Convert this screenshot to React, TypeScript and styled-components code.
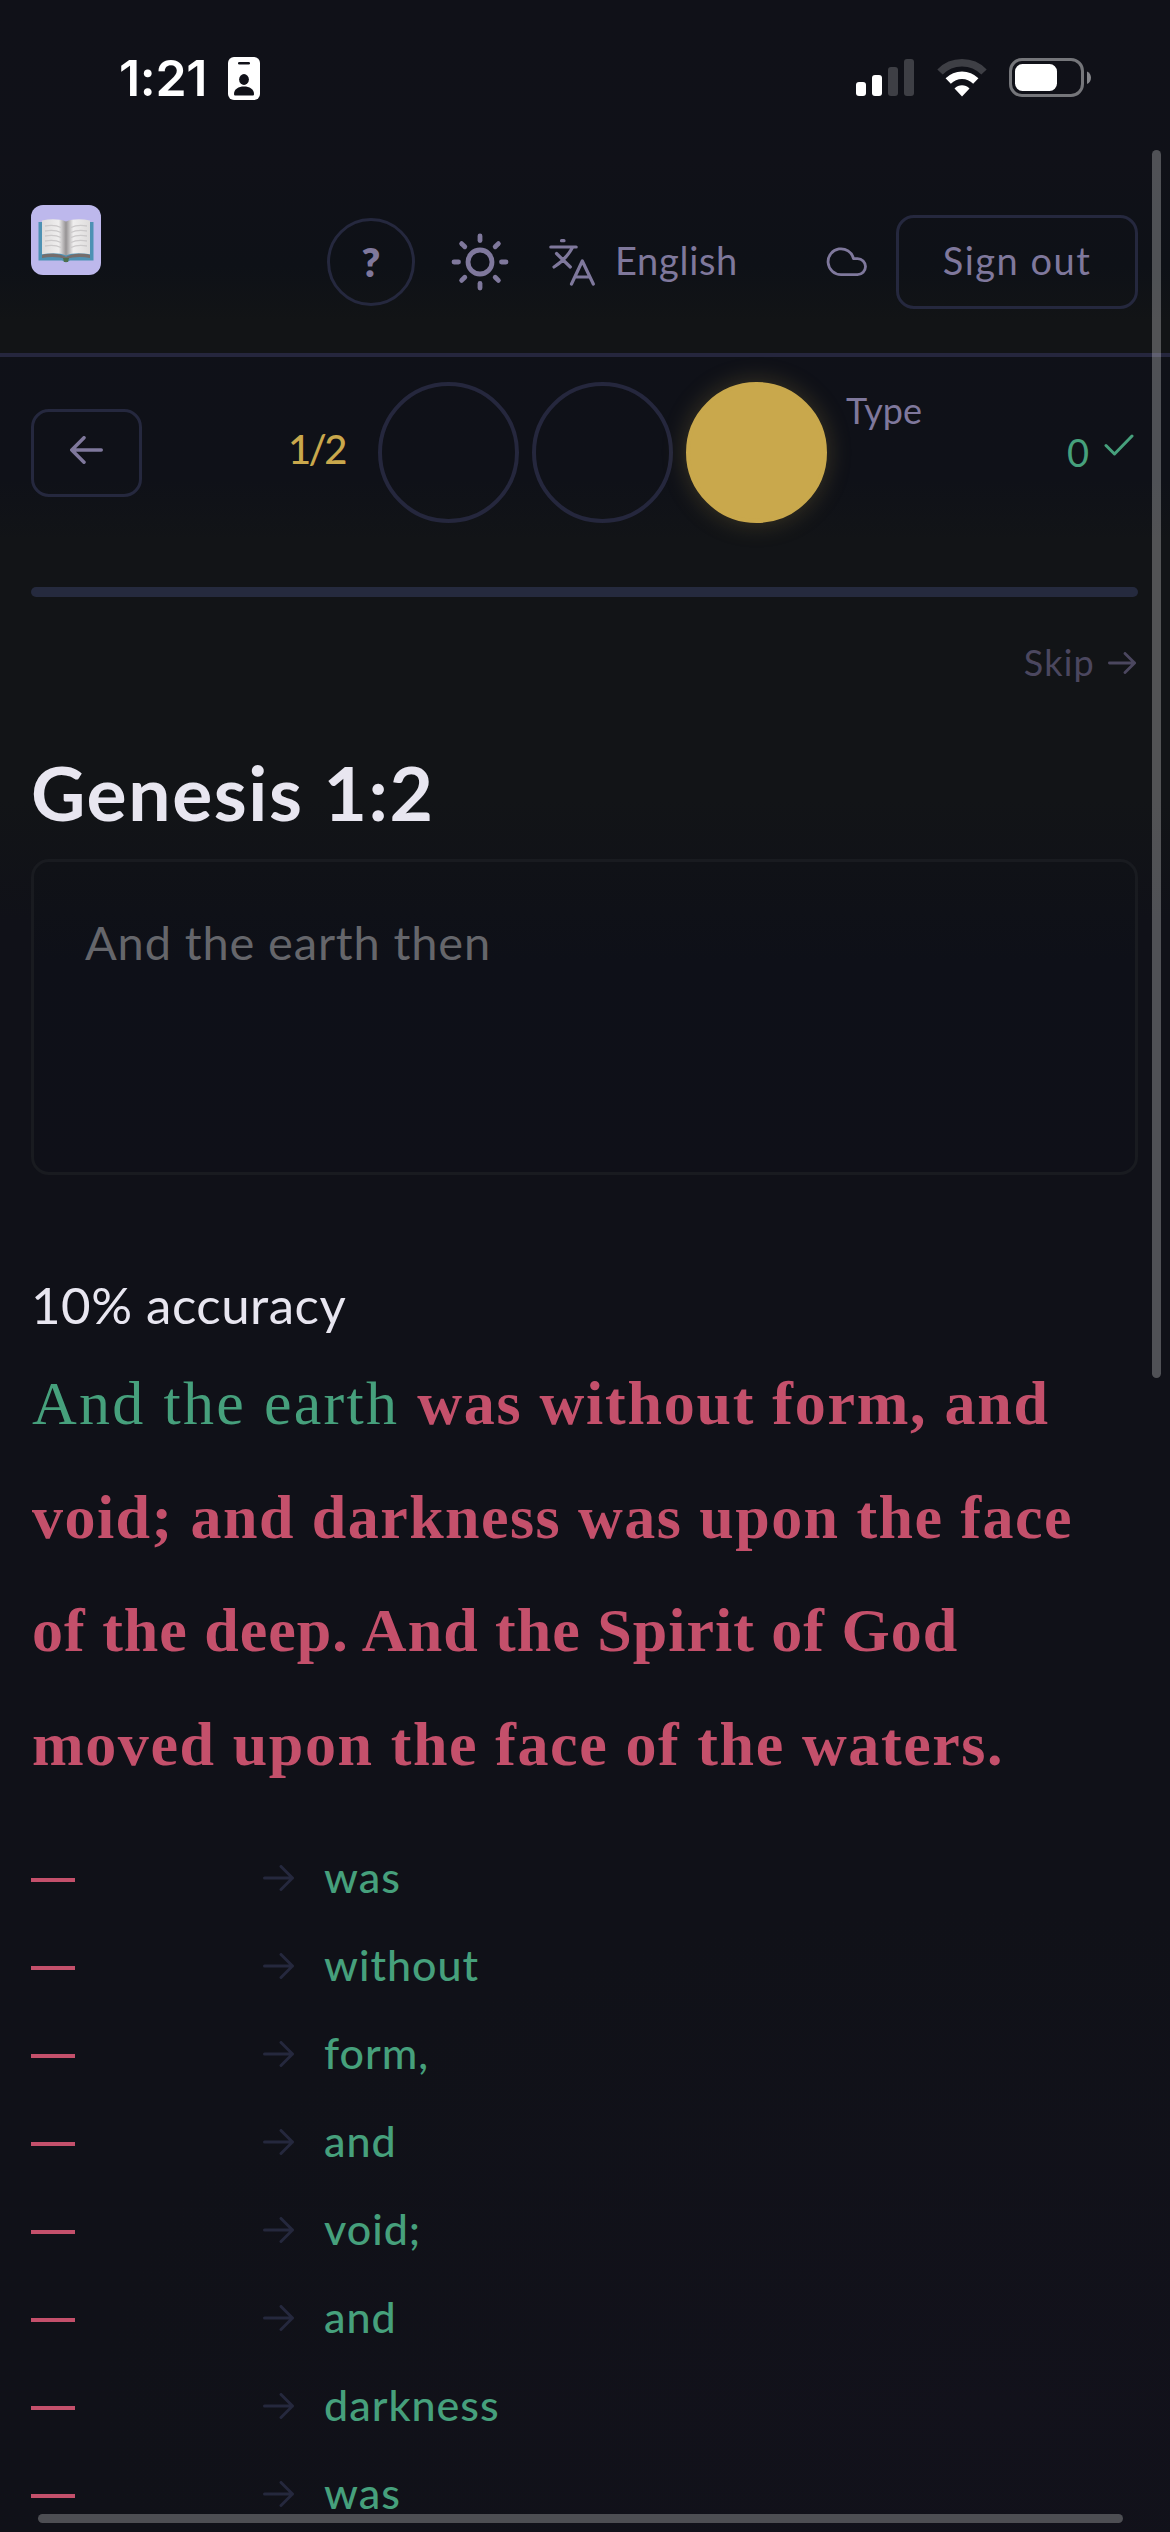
import React from 'react';
import styled, { createGlobalStyle } from 'styled-components';

const sans = '"Lato", "Noto Sans", sans-serif';
const serif = '"Liberation Serif", serif';

const GlobalStyle = createGlobalStyle`
  * { box-sizing: border-box; }
  html, body { margin: 0; padding: 0; background: #101118; }
`;

const Page = styled.div`
  position: relative;
  width: 1170px;
  height: 2532px;
  overflow: hidden;
  color: #e8e6f0;
  font-family: ${sans};
  background:
    radial-gradient(ellipse 900px 500px at 85% 95%, rgba(20, 18, 30, 0.5), transparent),
    linear-gradient(#101118 0, #0f1118 480px, #121417 540px, #121417 800px, #101118 920px, #101118 100%);
`;

const Label = styled.span<{ $size: number; $color: string; $spacing?: number; $weight?: number; $width?: number }>`
  display: block;
  flex: none;
  width: ${(p) => (p.$width ? `${p.$width}px` : 'auto')};
  font-size: ${(p) => p.$size}px;
  line-height: 1.2;
  font-weight: ${(p) => p.$weight ?? 400};
  letter-spacing: ${(p) => p.$spacing ?? 0}px;
  color: ${(p) => p.$color};
  white-space: nowrap;
`;

const StatusBar = styled.div`
  display: flex;
  align-items: center;
  justify-content: space-between;
  height: 156px;
  padding: 0 79px 0 119px;
`;

const StatusGroup = styled.div<{ $gap: number }>`
  display: flex;
  align-items: center;
  gap: ${(p) => p.$gap}px;
`;

const Clock = styled.span`
  width: 90px;
  font: 600 50px/60px Inter, sans-serif;
  letter-spacing: -0.3px;
  color: #fff;
  white-space: nowrap;
`;

const Header = styled.header`
  display: flex;
  align-items: flex-start;
  justify-content: space-between;
  height: 201px;
  padding: 49px 32px 0 31px;
  border-bottom: 4px solid #25263d;
  background: linear-gradient(#101118 0, #0e1117 110px, #121416 165px);
`;

const Actions = styled.nav`
  display: flex;
  align-items: center;
  height: 94px;
  margin-top: 10px;
`;

const HelpButton = styled.button`
  display: flex;
  align-items: center;
  justify-content: center;
  width: 88px;
  height: 88px;
  padding: 0;
  border: 3px solid #25283e;
  border-radius: 50%;
  background: transparent;
  font-family: ${sans};
`;

const Spacer = styled.span<{ $w: number }>`
  flex: none;
  width: ${(p) => p.$w}px;
`;

const OutlineButton = styled.button<{ $w: number; $h: number }>`
  display: flex;
  align-items: center;
  justify-content: center;
  width: ${(p) => p.$w}px;
  height: ${(p) => p.$h}px;
  padding: 0;
  border: 3px solid #25283e;
  border-radius: 18px;
  background: transparent;
  font-family: ${sans};
`;

const Toolbar = styled.div`
  display: flex;
  align-items: center;
  height: 141px;
  margin: 25px 32px 0 31px;
`;

const Steps = styled.div`
  display: flex;
  gap: 13px;
`;

const Step = styled.span<{ $active?: boolean }>`
  width: 141px;
  height: 141px;
  border-radius: 50%;
  border: 4px solid ${(p) => (p.$active ? '#c9a84c' : '#25273d')};
  background: ${(p) => (p.$active ? '#c9a84c' : 'transparent')};
  box-shadow: ${(p) => (p.$active ? '0 0 24px rgba(201, 168, 76, 0.25)' : 'none')};
`;

const StepName = styled.div`
  align-self: flex-start;
  margin: 7px 0 0 19px;
`;

const Score = styled.div`
  display: flex;
  align-items: center;
  margin-left: auto;
  gap: 15px;
  padding-right: 4px;
`;

const Raised = styled.span<{ $by: number }>`
  display: flex;
  padding-bottom: ${(p) => p.$by}px;
`;

const Track = styled.div`
  height: 10px;
  margin: 64px 32px 0 31px;
  border-radius: 5px;
  background: #252a3e;
`;

const SkipRow = styled.div`
  display: flex;
  align-items: center;
  justify-content: flex-end;
  gap: 13px;
  height: 44px;
  margin-top: 44px;
  padding-right: 34px;
`;

const Title = styled.h1`
  margin: 57px 0 0 31px;
  font-size: 75px;
  line-height: 100px;
  font-weight: 700;
  letter-spacing: 1.6px;
`;

const Answer = styled.div`
  height: 316px;
  margin: 17px 32px 0 31px;
  padding: 52px 51px;
  border: 3px solid #191b20;
  border-radius: 18px;
  background: linear-gradient(#101217 0, #0e1018 100px, #0f1018 100%);
`;

const Accuracy = styled.div`
  height: 60px;
  margin: 99px 0 0 31px;
`;

const Verse = styled.div`
  margin: 13px 0 0 32px;
`;

const VerseLine = styled.div<{ $spacing: number }>`
  height: 113.7px;
  font-family: ${serif};
  font-size: 62px;
  line-height: 113.7px;
  font-weight: 700;
  letter-spacing: ${(p) => p.$spacing}px;
  color: #c4506b;
  white-space: pre;
`;

const Correct = styled.span<{ $spacing: number }>`
  font-weight: 400;
  letter-spacing: ${(p) => p.$spacing}px;
  color: #46a07c;
`;

const Fixes = styled.div`
  margin: 32px 0 0 31px;
`;

const FixRow = styled.div`
  display: grid;
  grid-template-columns: 232px 61px auto;
  align-items: center;
  height: 88px;
`;

const Missing = styled.span`
  width: 44px;
  height: 4px;
  margin-top: 4px;
  background: #c4506b;
`;

const VerticalThumb = styled.div`
  position: absolute;
  left: 1152px;
  top: 150px;
  width: 9px;
  height: 1228px;
  border-radius: 5px;
  background: rgba(255, 255, 255, 0.27);
`;

const HorizontalThumb = styled.div`
  position: absolute;
  left: 38px;
  top: 2514px;
  width: 1085px;
  height: 9px;
  border-radius: 5px;
  background: #4d4e53;
`;

const muted = '#7f789c';

const BadgeIcon = () => (
  <svg width="32" height="43" viewBox="0 0 32 43">
    <rect width="32" height="43" rx="6" fill="#fff" />
    <rect x="10" y="5" width="12" height="2.6" rx="1.3" fill="#101118" />
    <ellipse cx="16" cy="22.5" rx="4.9" ry="5.4" fill="#101118" />
    <path d="M6 37c0-5 4.500-7.500 10-7.500s10 2.500 10 7.500c0 1-.5 1.600-1.500 1.600h-17C6.500 38.600 6 38 6 37z" fill="#101118" />
  </svg>
);

const SignalIcon = () => (
  <svg width="58" height="38" viewBox="0 0 58 38">
    <rect x="0" y="23" width="10" height="14" rx="3" fill="#fff" />
    <rect x="16" y="16" width="10" height="21" rx="3" fill="#fff" />
    <rect x="32" y="8" width="10" height="29" rx="3" fill="#3e3f45" />
    <rect x="48" y="0" width="10" height="37" rx="3" fill="#3e3f45" />
  </svg>
);

const WifiIcon = () => (
  <svg width="50" height="38" viewBox="0 0 50 38">
    <path d="M3 13C15 0.700 35 0.700 47 13" fill="none" stroke="#3e3f45" strokeWidth="7.500" />
    <path d="M11.200 22c7.800-7.700 19.800-7.700 27.600 0" fill="none" stroke="#fff" strokeWidth="7.500" />
    <path d="M25 37.500l-7.500-8c4.300-4.300 10.700-4.300 15 0z" fill="#fff" />
  </svg>
);

const BatteryIcon = () => (
  <svg width="82" height="40" viewBox="0 0 82 40">
    <rect x="1.500" y="1.500" width="72" height="36" rx="11.500" fill="none" stroke="#75767a" strokeWidth="3" />
    <rect x="6" y="6" width="42" height="27" rx="7.500" fill="#fff" />
    <path d="M78 13.500c5.300 2 5.300 10.500 0 12.500z" fill="#85868a" />
  </svg>
);

const BookIcon = () => (
  <svg width="70" height="70" viewBox="0 0 70 70">
    <defs>
      <linearGradient id="left-page" x1="0" x2="1">
        <stop offset="0" stopColor="#dedcdc" />
        <stop offset="0.7" stopColor="#efeeee" />
        <stop offset="1" stopColor="#969394" />
      </linearGradient>
      <linearGradient id="right-page" x1="1" x2="0">
        <stop offset="0" stopColor="#dedcdc" />
        <stop offset="0.7" stopColor="#efeeee" />
        <stop offset="1" stopColor="#969394" />
      </linearGradient>
    </defs>
    <rect width="70" height="70" rx="12" fill="#bdb8ec" />
    <path d="M7.500 17h55v38.500H39l-4 2-4-2H7.500z" fill="#4d91b3" />
    <path d="M11 50c8-2.500 17-2 24 2 7-4 16-4.500 24-2v3c-8-1.500-17-1.500-24 1.500-7-3-16-3-24-1.500z" fill="#756d6c" />
    <path d="M11 15.500c9-2 18-1.500 24 1v34c-6-2.800-15-3-24-1.200z" fill="url(#left-page)" />
    <path d="M59 15.500c-9-2-18-1.500-24 1v34c6-2.800 15-3 24-1.200z" fill="url(#right-page)" />
    <path
      d="M14 21c6-1 12-.5 16 1.500M14 26c6-1 12-.5 16 1.500M14 31c6-1 12-.5 16 1.500M14 36c6-1 12-.5 16 1.500M14 41c6-1 12-.5 16 1.500M56 21c-6-1-12-.5-16 1.500M56 26c-6-1-12-.5-16 1.500M56 31c-6-1-12-.5-16 1.500M56 36c-6-1-12-.5-16 1.500M56 41c-6-1-12-.5-16 1.500"
      fill="none" stroke="#cbc9ca" strokeWidth="1.300"
    />
    <path d="M32 53h6l-1 4h-4z" fill="#4f6f4e" />
  </svg>
);

const SunIcon = () => (
  <svg width="58" height="58" viewBox="-29 -29 58 58" fill="none" stroke={muted} strokeWidth="4.800" strokeLinecap="round">
    <circle r="12" />
    {[0, 45, 90, 135, 180, 225, 270, 315].map((a) => (
      <path key={a} d="M0-21.500V-26" transform={`rotate(${a})`} />
    ))}
  </svg>
);

const TranslateIcon = () => (
  <svg width="48" height="48" viewBox="0 0 48 48" fill="none" stroke={muted} strokeWidth="3.200" strokeLinecap="round" strokeLinejoin="round">
    <path d="M13.500 2.700h2.500M2.800 9H28.200M24.500 9.500Q17.500 22 6 29M8.500 15.500L22.300 29M23.500 46L34.300 23L45.300 46M27 39H42" />
  </svg>
);

const CloudIcon = () => (
  <svg width="42" height="32" viewBox="0 0 42 32" fill="none" stroke={muted} strokeWidth="2.800" strokeLinecap="round" strokeLinejoin="round">
    <path d="M31.500 28.600H15A12.900 12.900 0 1 1 27.500 12.600H31.500a8 8 0 1 1 0 16z" />
  </svg>
);

const ArrowIcon = ({ w, h, color, stroke, left }: { w: number; h: number; color: string; stroke: number; left?: boolean }) => {
  const m = stroke / 2;
  const d = left
    ? `M${w - m} ${h / 2}H${m}M${h / 2} ${m}L${m} ${h / 2}L${h / 2} ${h - m}`
    : `M${m} ${h / 2}H${w - m}M${w - h / 2} ${m}L${w - m} ${h / 2}L${w - h / 2} ${h - m}`;
  return (
    <svg width={w} height={h} viewBox={`0 0 ${w} ${h}`} fill="none" stroke={color} strokeWidth={stroke} strokeLinecap="round" strokeLinejoin="round">
      <path d={d} />
    </svg>
  );
};

const CheckIcon = () => (
  <svg width="30" height="22" viewBox="0 0 30 22" fill="none" stroke="#46a07c" strokeWidth="3" strokeLinecap="round" strokeLinejoin="round">
    <path d="M2 11.500l8.500 8.500L28 2" />
  </svg>
);

const corrections = ['was', 'without', 'form,', 'and', 'void;', 'and', 'darkness', 'was'];

export default function App() {
  return (
    <Page>
      <GlobalStyle />
      <StatusBar>
        <StatusGroup $gap={19}>
          <Clock>1:21</Clock>
          <BadgeIcon />
        </StatusGroup>
        <StatusGroup $gap={22.5}>
          <SignalIcon />
          <WifiIcon />
          <BatteryIcon />
        </StatusGroup>
      </StatusBar>

      <Header>
        <BookIcon />
        <Actions>
          <HelpButton>
            <Label $size={40} $weight={800} $color={muted}>?</Label>
          </HelpButton>
          <Spacer $w={36} />
          <SunIcon />
          <Spacer $w={39} />
          <TranslateIcon />
          <Spacer $w={19} />
          <Raised $by={2}>
            <Label $size={38} $color={muted} $spacing={0.7} $width={125}>English</Label>
          </Raised>
          <Spacer $w={86} />
          <CloudIcon />
          <Spacer $w={28} />
          <OutlineButton $w={242} $h={94}>
            <Raised $by={2}>
              <Label $size={38} $color={muted} $spacing={1.5}>Sign out</Label>
            </Raised>
          </OutlineButton>
        </Actions>
      </Header>

      <Toolbar>
        <OutlineButton $w={111} $h={88}>
          <Raised $by={6}>
            <ArrowIcon w={33} h={28} color={muted} stroke={3.5} left />
          </Raised>
        </OutlineButton>
        <Spacer $w={146} />
        <Raised $by={8}>
          <Label $size={40} $color="#c9a84c" $weight={500} $spacing={-2.6} $width={90}>1/2</Label>
        </Raised>
        <Steps>
          <Step />
          <Step />
          <Step $active />
        </Steps>
        <StepName>
          <Label $size={36} $color={muted}>Type</Label>
        </StepName>
        <Score>
          <Label $size={38} $color="#46a07c">0</Label>
          <Raised $by={16}>
            <CheckIcon />
          </Raised>
        </Score>
      </Toolbar>

      <Track />

      <SkipRow>
        <Label $size={36} $color="#4b475f" $spacing={1.2}>Skip</Label>
        <ArrowIcon w={28} h={22} color="#4b475f" stroke={2.8} />
      </SkipRow>

      <Title>Genesis 1:2</Title>

      <Answer>
        <Label $size={47} $color="#65666b" $spacing={0.85}>And the earth then</Label>
      </Answer>

      <Accuracy>
        <Label $size={51} $color="#e8e6f0" $spacing={0.5}>10% accuracy</Label>
      </Accuracy>

      <Verse>
        <VerseLine $spacing={1.75}>
          <Correct $spacing={2.3}>And the earth </Correct>was without form, and
        </VerseLine>
        <VerseLine $spacing={1.45}>void; and darkness was upon the face</VerseLine>
        <VerseLine $spacing={1}>of the deep. And the Spirit of God</VerseLine>
        <VerseLine $spacing={1.6}>moved upon the face of the waters.</VerseLine>
      </Verse>

      <Fixes>
        {corrections.map((word, i) => (
          <FixRow key={i}>
            <Missing />
            <ArrowIcon w={31} h={26} color="#25283d" stroke={3} />
            <Raised $by={2}>
              <Label $size={43} $color="#46a07c" $weight={500} $spacing={1}>{word}</Label>
            </Raised>
          </FixRow>
        ))}
      </Fixes>

      <VerticalThumb />
      <HorizontalThumb />
    </Page>
  );
}
